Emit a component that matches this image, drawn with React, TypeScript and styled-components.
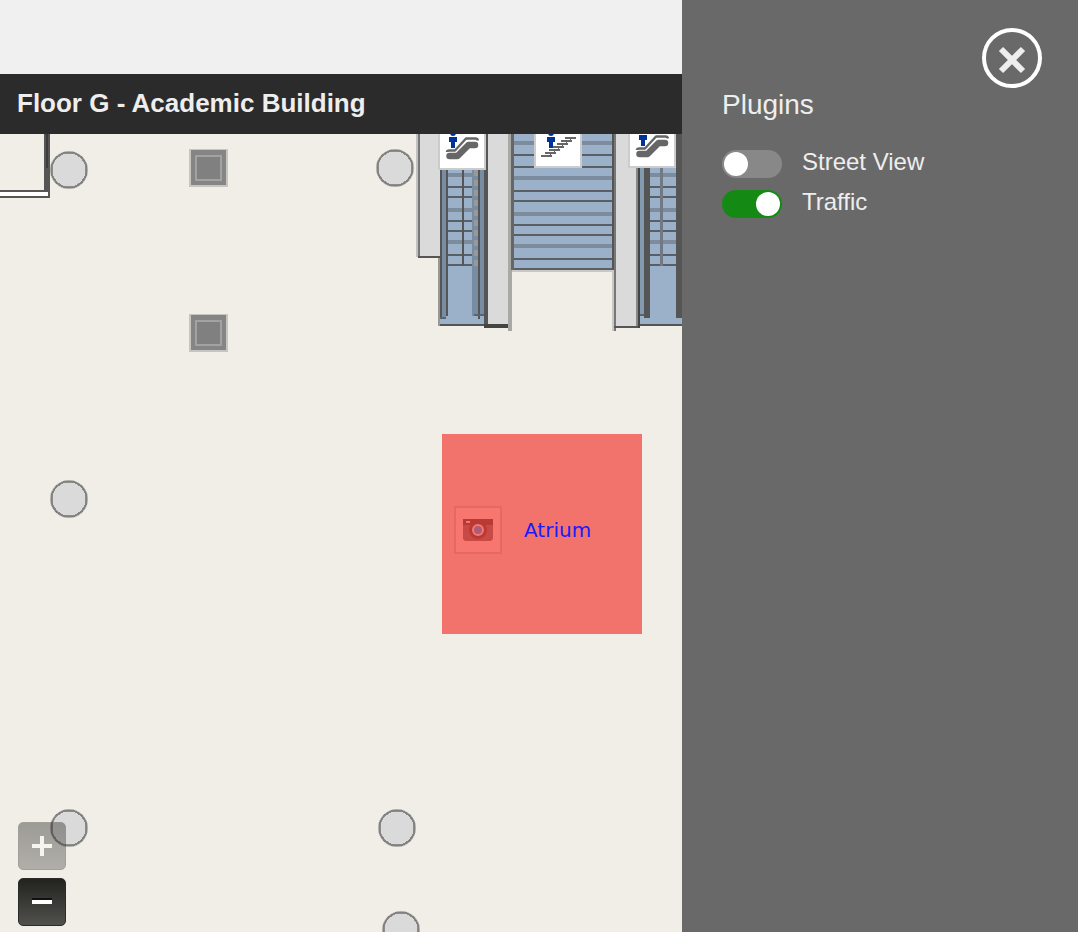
import React, { useState } from "react";
import styled, { createGlobalStyle } from "styled-components";

const GlobalStyle = createGlobalStyle`
  *, *::before { box-sizing: border-box; }
  body { margin: 0; background: #f0f0f0; font-family: "Liberation Sans", Arial, sans-serif; }
`;

const Page = styled.div`
  display: grid;
  grid-template-columns: minmax(0, 1fr) 396px;
  min-height: 100vh;
`;

const MapColumn = styled.main`
  display: flex;
  flex-direction: column;
  min-width: 0;
  padding-top: 74px;
`;

const TitleBar = styled.header`
  display: flex;
  align-items: center;
  height: 60px;
  padding: 0 17px 2px;
  background: #2b2b2b;
`;

const Title = styled.h1`
  margin: 0;
  font-size: 26px;
  line-height: 32px;
  font-weight: 700;
  color: #eee;
`;

const MapCanvas = styled.section`
  position: relative;
  flex: 1;
  min-height: 560px;
  overflow: hidden;
  background: #f1eee7;
`;

const FloorPlan = styled.svg`
  position: absolute;
  inset: 0;
  width: 100%;
  height: 100%;
`;

const Region = styled.a`
  position: absolute;
  left: 442px;
  top: 300px;
  display: flex;
  align-items: center;
  gap: 22px;
  width: 200px;
  height: 200px;
  padding: 0 12px 8px;
  background: #f1736b;
  color: #1a1aff;
  font-family: "DejaVu Sans", Verdana, sans-serif;
  font-size: 20px;
  line-height: 24px;
  text-decoration: none;
`;

const ZoomControls = styled.div`
  position: absolute;
  left: 18px;
  bottom: 6px;
  display: grid;
  gap: 8px;
`;

const ZoomButton = styled.button`
  display: grid;
  place-items: center;
  width: 48px;
  height: 48px;
  padding: 0;
  border: 1px solid #2b2b2a;
  border-radius: 5px;
  background: linear-gradient(#22221f, #50504c);
  &:disabled { opacity: 0.4; }
`;

const Panel = styled.aside`
  display: flex;
  flex-direction: column;
  padding: 28px 36px 28px 40px;
  background: #696969;
  color: #eee;
`;

const CloseButton = styled.button`
  display: grid;
  place-items: center;
  align-self: flex-end;
  width: 60px;
  height: 60px;
  padding: 4px 0 0;
  border: 4px solid #fff;
  border-radius: 50%;
  background: transparent;
  cursor: pointer;
`;

const PanelTitle = styled.h2`
  margin: 0 0 20px;
  font-size: 28px;
  line-height: 34px;
  font-weight: 400;
`;

const PluginRow = styled.label`
  display: flex;
  align-items: flex-start;
  gap: 20px;
  height: 40px;
  padding-top: 8px;
  font-size: 24px;
  line-height: 24px;
  cursor: pointer;
`;

const Switch = styled.input`
  appearance: none;
  display: flex;
  width: 60px;
  height: 28px;
  margin: 0;
  padding: 2px;
  border-radius: 14px;
  background: #888;
  cursor: pointer;
  &::before {
    content: "";
    width: 24px;
    height: 24px;
    border-radius: 50%;
    background: #fff;
  }
  &:checked {
    justify-content: flex-end;
    background: #148a14;
  }
`;

const BLUE = "#9bb1ca";
const WALL = "#dadada";
const DARK = "#555";

type Tread = [y: number, soft?: boolean];

const Treads = ({ x, width, rows }: { x: number; width: number; rows: Tread[] }) => (
  <>
    {rows.map(([y, soft]) => (
      <rect
        key={y}
        x={x}
        y={soft ? y - 2 : y - 1}
        width={width}
        height={soft ? 4 : 2}
        fill={soft ? "#7c8c9d" : "#5a5f66"}
      />
    ))}
  </>
);

const escalatorRows: Tread[] = [
  [175, true], [187], [197], [210, true], [221], [231], [242, true], [255], [265],
];
const stairRows: Tread[] = [
  [143, true], [155], [167], [178, true], [191], [201], [214, true], [225], [235], [246, true], [259], [269],
];

const Column = ({ cx, cy }: { cx: number; cy: number }) => (
  <g>
    <circle cx={cx} cy={cy} r="18" fill={WALL} stroke="#aeadaa" strokeWidth="2" />
    <circle
      cx={cx}
      cy={cy}
      r="17.5"
      fill="none"
      stroke="#6e6e6e"
      strokeWidth="2"
      strokeOpacity="0.7"
      shapeRendering="crispEdges"
    />
  </g>
);

const Pillar = ({ x, y }: { x: number; y: number }) => (
  <g transform={`translate(${x} ${y})`} shapeRendering="crispEdges">
    <rect width="39" height="38" fill="#c6c5c1" />
    <rect x="2" y="1" width="35" height="35" fill="#858585" />
    <rect x="7" y="7" width="25" height="24" fill="#808080" stroke="#a2a2a2" strokeWidth="2" />
  </g>
);

const Sign = ({ x, bottom, children }: { x: number; bottom: number; children: React.ReactNode }) => (
  <g>
    <rect x={x} y={bottom - 48} width="48" height="48" fill="#ccc" />
    <rect x={x + 2} y={bottom - 46} width="44" height="44" fill="#fff" />
    {children}
  </g>
);

const Person = ({ x, y }: { x: number; y: number }) => (
  <g fill="#003399" transform={`translate(${x} ${y})`}>
    <circle cx="4" cy="-4" r="3" />
    <path d="M0 0h8v5h-2v6H2V5H0z" />
  </g>
);

const Escalator = ({ x, y }: { x: number; y: number }) => (
  <g transform={`translate(${x} ${y})`} fill="none" stroke="#666" strokeLinejoin="round">
    <path d="M3.5 19h8L22.5 8h6.5" strokeWidth="6.5" strokeLinecap="round" />
    <path d="M1 15q0-1.500 2.500-1.500h5.500L20 1.500h9.500q2 0 2.500 2" strokeWidth="2.400" />
  </g>
);

const Steps = ({ x, y }: { x: number; y: number }) => (
  <g fill="#666" transform={`translate(${x} ${y})`} shapeRendering="crispEdges">
    {[0, 1, 2, 3, 4, 5, 6].map((i) => (
      <React.Fragment key={i}>
        <rect x={i * 4} y={18 - i * 3} width="11" height="2" />
        {i > 0 && <rect x={i * 4 + 5} y={20 - i * 3} width="1" height="1" />}
      </React.Fragment>
    ))}
  </g>
);

const Plan = () => (
  <FloorPlan aria-hidden="true">
    <g transform="translate(0 -134)">
      <g shapeRendering="crispEdges">
        <rect x="0" y="190" width="50" height="8" fill={DARK} />
        <rect x="0" y="192" width="48" height="4" fill="#fff" />
        <rect x="44" y="134" width="6" height="58" fill={DARK} />
        <rect x="46" y="134" width="2" height="34" fill="#3c3c3c" />
      </g>

      <Column cx={69} cy={170} />
      <Column cx={395} cy={168} />
      <Column cx={69} cy={499} />
      <Column cx={69} cy={828} />
      <Column cx={397} cy={828} />
      <Column cx={401} cy={930} />
      <Pillar x={189} y={149} />
      <Pillar x={189} y={314} />

      <g shapeRendering="crispEdges">
        <rect x="416" y="134" width="4" height="123" fill="#c2c1bd" />
        <rect x="418" y="134" width="22" height="124" fill={DARK} />
        <rect x="418" y="134" width="2" height="122" fill="#777" />
        <rect x="420" y="134" width="20" height="122" fill={WALL} />

        <rect x="438" y="258" width="2" height="68" fill="#999893" />
        <rect x="440" y="134" width="46" height="192" fill={BLUE} />
        <rect x="440" y="134" width="2" height="184" fill={DARK} />
        <rect x="442" y="134" width="4" height="184" fill="#788da2" />
        <Treads x={448} width={26} rows={escalatorRows} />
        <rect x="462" y="170" width="2" height="96" fill={DARK} />
        <rect x="446" y="134" width="2" height="182" fill={DARK} />
        <rect x="440" y="317" width="6" height="2" fill="#5a6470" />
        <rect x="472" y="134" width="6" height="182" fill="#788da2" />
        <line x1="476" y1="170" x2="476" y2="268" stroke="#96999d" strokeWidth="4" strokeDasharray="6 4" />
        <rect x="478" y="134" width="2" height="185" fill={DARK} />
        <rect x="480" y="134" width="4" height="182" fill="#788da2" />
        <rect x="474" y="314" width="10" height="2" fill="#5a6470" />
        <rect x="440" y="324" width="46" height="2" fill={DARK} />

        <rect x="484" y="134" width="4" height="192" fill={DARK} />
        <rect x="488" y="134" width="20" height="191" fill={WALL} />
        <rect x="484" y="324" width="26" height="4" fill="#444" />
        <rect x="508" y="134" width="4" height="197" fill="#a9a8a5" />

        <rect x="512" y="269" width="104" height="3" fill="#cac8c4" />
        <rect x="512" y="134" width="102" height="136" fill={BLUE} />
        <Treads x={514} width={98} rows={stairRows} />
        <rect x="511" y="134" width="3" height="136" fill="#666" />
        <rect x="612" y="134" width="2" height="197" fill="#cac8c4" />
        <rect x="612" y="134" width="2" height="136" fill={DARK} />

        <rect x="614" y="134" width="2" height="197" fill="#777" />
        <rect x="616" y="134" width="22" height="192" fill={WALL} />
        <rect x="614" y="326" width="26" height="2" fill={DARK} />

        <rect x="640" y="134" width="42" height="192" fill={BLUE} />
        <rect x="638" y="134" width="2" height="194" fill="#444" />
        <rect x="636" y="134" width="2" height="192" fill="#888" />
        <rect x="640" y="134" width="4" height="182" fill="#829bb0" />
        <Treads x={650} width={26} rows={escalatorRows} />
        <rect x="660" y="134" width="3" height="132" fill="#717a84" />
        <rect x="644" y="134" width="6" height="184" fill={DARK} />
        <rect x="676" y="134" width="6" height="184" fill={DARK} />
        <rect x="640" y="314" width="4" height="2" fill="#5a6470" />
        <rect x="640" y="324" width="42" height="2" fill={DARK} />
      </g>

      <Sign x={438} bottom={170}>
        <Person x={449} y={137} />
        <Escalator x={446} y={137} />
      </Sign>
      <Sign x={534} bottom={168}>
        <Steps x={541} y={137} />
        <Person x={547} y={137} />
      </Sign>
      <Sign x={628} bottom={168}>
        <Person x={639} y={135} />
        <Escalator x={636} y={135} />
      </Sign>
    </g>
  </FloorPlan>
);

const CameraIcon = () => (
  <svg width="48" height="48" viewBox="0 0 48 48" aria-hidden="true">
    <rect x="1" y="1" width="46" height="46" fill="#f7766f" stroke="#e4695f" strokeWidth="2" />
    <path d="M9 13h30v20l-2 2H11l-2-2z" fill="#c84a45" />
    <path d="M9 13h30v6H9z" fill="#b93a35" />
    <rect x="12" y="15" width="4" height="2" fill="#ef7a73" />
    <circle cx="24" cy="24" r="9" fill="#b93a35" />
    <circle cx="24" cy="24" r="5" fill="#ad5c78" stroke="#f7766f" strokeWidth="2" />
  </svg>
);

export default function App() {
  const [plugins, setPlugins] = useState([
    { name: "Street View", on: false },
    { name: "Traffic", on: true },
  ]);
  const toggle = (name: string) =>
    setPlugins((list) => list.map((p) => (p.name === name ? { ...p, on: !p.on } : p)));

  return (
    <>
      <GlobalStyle />
      <Page>
        <MapColumn>
          <TitleBar>
            <Title>Floor G - Academic Building</Title>
          </TitleBar>
          <MapCanvas aria-label="Floor map">
            <Plan />
            <Region href="#atrium">
              <CameraIcon />
              Atrium
            </Region>
            <ZoomControls>
              <ZoomButton type="button" aria-label="Zoom in" disabled>
                <svg width="20" height="20" aria-hidden="true">
                  <path d="M0 10h20M10 0v20" stroke="#fff" strokeWidth="4" />
                </svg>
              </ZoomButton>
              <ZoomButton type="button" aria-label="Zoom out">
                <svg width="20" height="20" aria-hidden="true">
                  <path d="M0 7h20" stroke="#111" strokeWidth="2" />
                  <path d="M0 10h20" stroke="#fff" strokeWidth="4" />
                </svg>
              </ZoomButton>
            </ZoomControls>
          </MapCanvas>
        </MapColumn>
        <Panel>
          <CloseButton type="button" aria-label="Close">
            <svg width="28" height="28" aria-hidden="true">
              <path d="M3 3l22 22M25 3L3 25" stroke="#eee" strokeWidth="6" />
            </svg>
          </CloseButton>
          <PanelTitle>Plugins</PanelTitle>
          {plugins.map((p) => (
            <PluginRow key={p.name}>
              <Switch type="checkbox" checked={p.on} onChange={() => toggle(p.name)} />
              {p.name}
            </PluginRow>
          ))}
        </Panel>
      </Page>
    </>
  );
}
